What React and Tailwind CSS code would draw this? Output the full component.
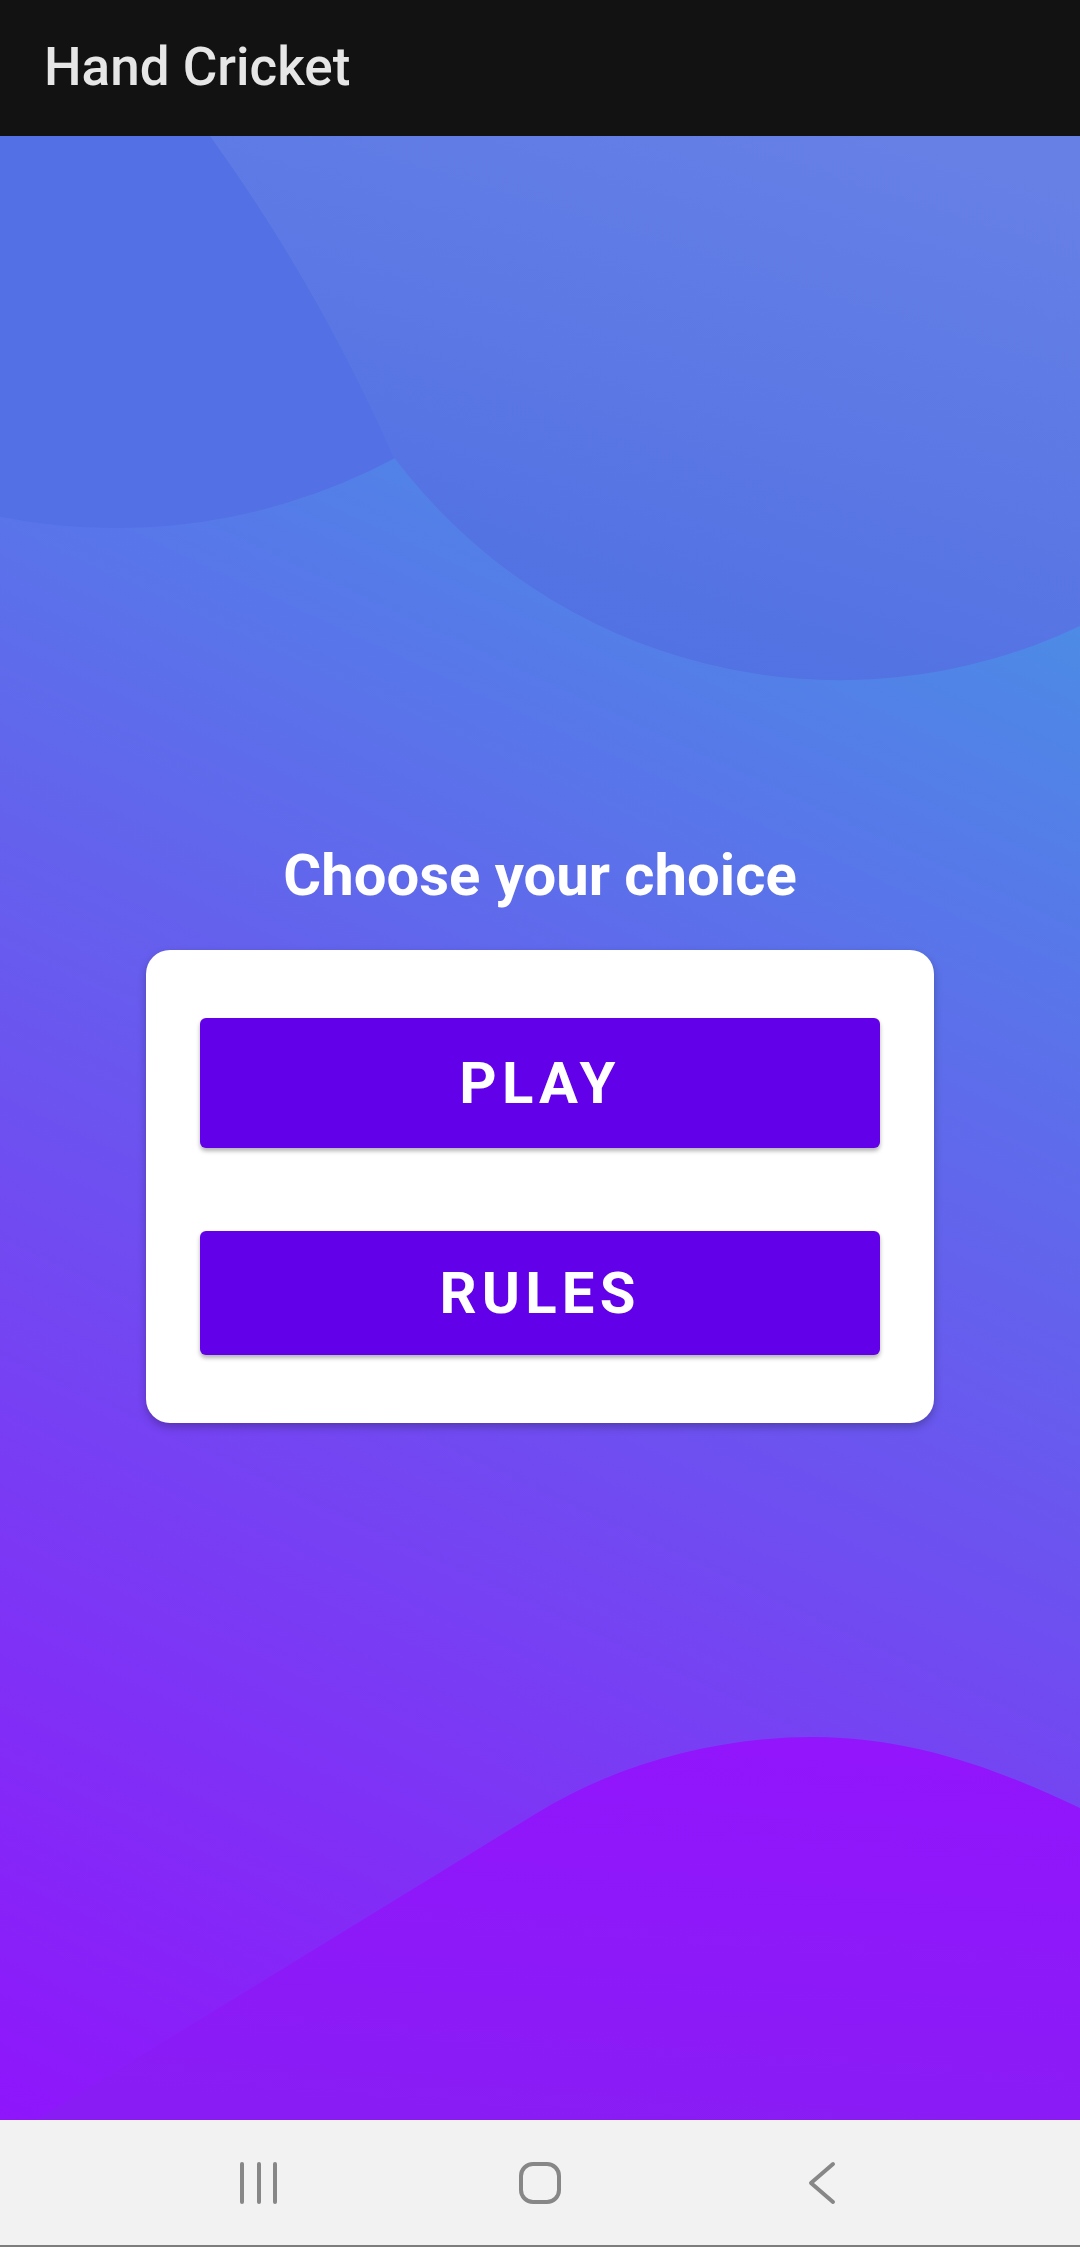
import React from 'react';

const font = { fontFamily: 'Roboto, "Noto Sans", sans-serif' };

// background shapes behind the menu card
const Blobs = () => (
  <svg
    className="absolute inset-0 h-full w-full"
    viewBox="0 0 1080 1984"
    preserveAspectRatio="none"
  >
    <defs>
      <linearGradient id="bigBlob" x1="0.8" y1="0" x2="0.3" y2="1">
        <stop offset="0" stopColor="#6680e6" />
        <stop offset="1" stopColor="#4f6fe2" />
      </linearGradient>
      <linearGradient id="bottomBlob" x1="0.6" y1="0" x2="0.4" y2="1">
        <stop offset="0" stopColor="#9215fc" />
        <stop offset="1" stopColor="#891cf5" />
      </linearGradient>
    </defs>
    <circle cx="116" cy="-199" r="591" fill="#5370e4" />
    <path
      d="M210 0 Q318 150 393 320 A558 558 0 0 0 1080 490 L1080 0 Z"
      fill="url(#bigBlob)"
    />
    <path
      d="M36 1984 L537 1677 C620 1626 720 1601 813 1601 C920 1601 1010 1639 1080 1672 L1080 1984 Z"
      fill="url(#bottomBlob)"
    />
  </svg>
);

const MenuButton = ({ label, height }) => (
  <button
    className={`w-full ${height} rounded-[6px] bg-[#6200ea] text-[58px] font-bold uppercase tracking-[0.09em] text-white shadow-[0_3px_4px_rgba(0,0,0,0.3)]`}
  >
    {label}
  </button>
);

const NavBar = () => (
  <div className="flex h-[127px] items-center justify-center gap-[221px] border-b-2 border-[#7d7d7d] bg-[#f2f2f2]">
    <svg width="60" height="44" viewBox="0 0 60 44">
      <g stroke="#878787" strokeWidth="4" strokeLinecap="round">
        <line x1="13" y1="3" x2="13" y2="41" />
        <line x1="30" y1="3" x2="30" y2="41" />
        <line x1="46" y1="3" x2="46" y2="41" />
      </g>
    </svg>
    <svg width="60" height="44" viewBox="0 0 60 44">
      <rect x="11" y="3" width="38" height="38" rx="12" fill="none" stroke="#878787" strokeWidth="4" />
    </svg>
    <svg width="60" height="44" viewBox="0 0 60 44">
      <polyline
        points="42,3 20,22 42,41"
        fill="none"
        stroke="#878787"
        strokeWidth="4"
        strokeLinecap="round"
        strokeLinejoin="round"
      />
    </svg>
  </div>
);

export default function App() {
  return (
    <div className="flex h-[2247px] w-[1080px] flex-col" style={font}>
      {/* toolbar */}
      <div className="flex h-[136px] shrink-0 items-center bg-[#121212] pl-[44px]">
        <h1 className="text-[53px] font-medium text-[#e6e6e6]">Hand Cricket</h1>
      </div>

      {/* main */}
      <div className="relative h-[1984px] overflow-hidden bg-[linear-gradient(25deg,#8f15fb_0%,#3ca8e0_100%)]">
        <Blobs />
        <div className="relative flex flex-col items-center pt-[705px]">
          <h2 className="text-[58px] leading-[68px] font-bold text-white">Choose your choice</h2>
          <div className="mt-[41px] flex w-[788px] flex-col gap-[83px] rounded-[24px] bg-white px-[54px] py-[68px] shadow-[0_4px_8px_rgba(0,0,0,0.25)]">
            <MenuButton label="Play" height="h-[130px]" />
            <MenuButton label="Rules" height="h-[124px]" />
          </div>
        </div>
      </div>

      <NavBar />
    </div>
  );
}
